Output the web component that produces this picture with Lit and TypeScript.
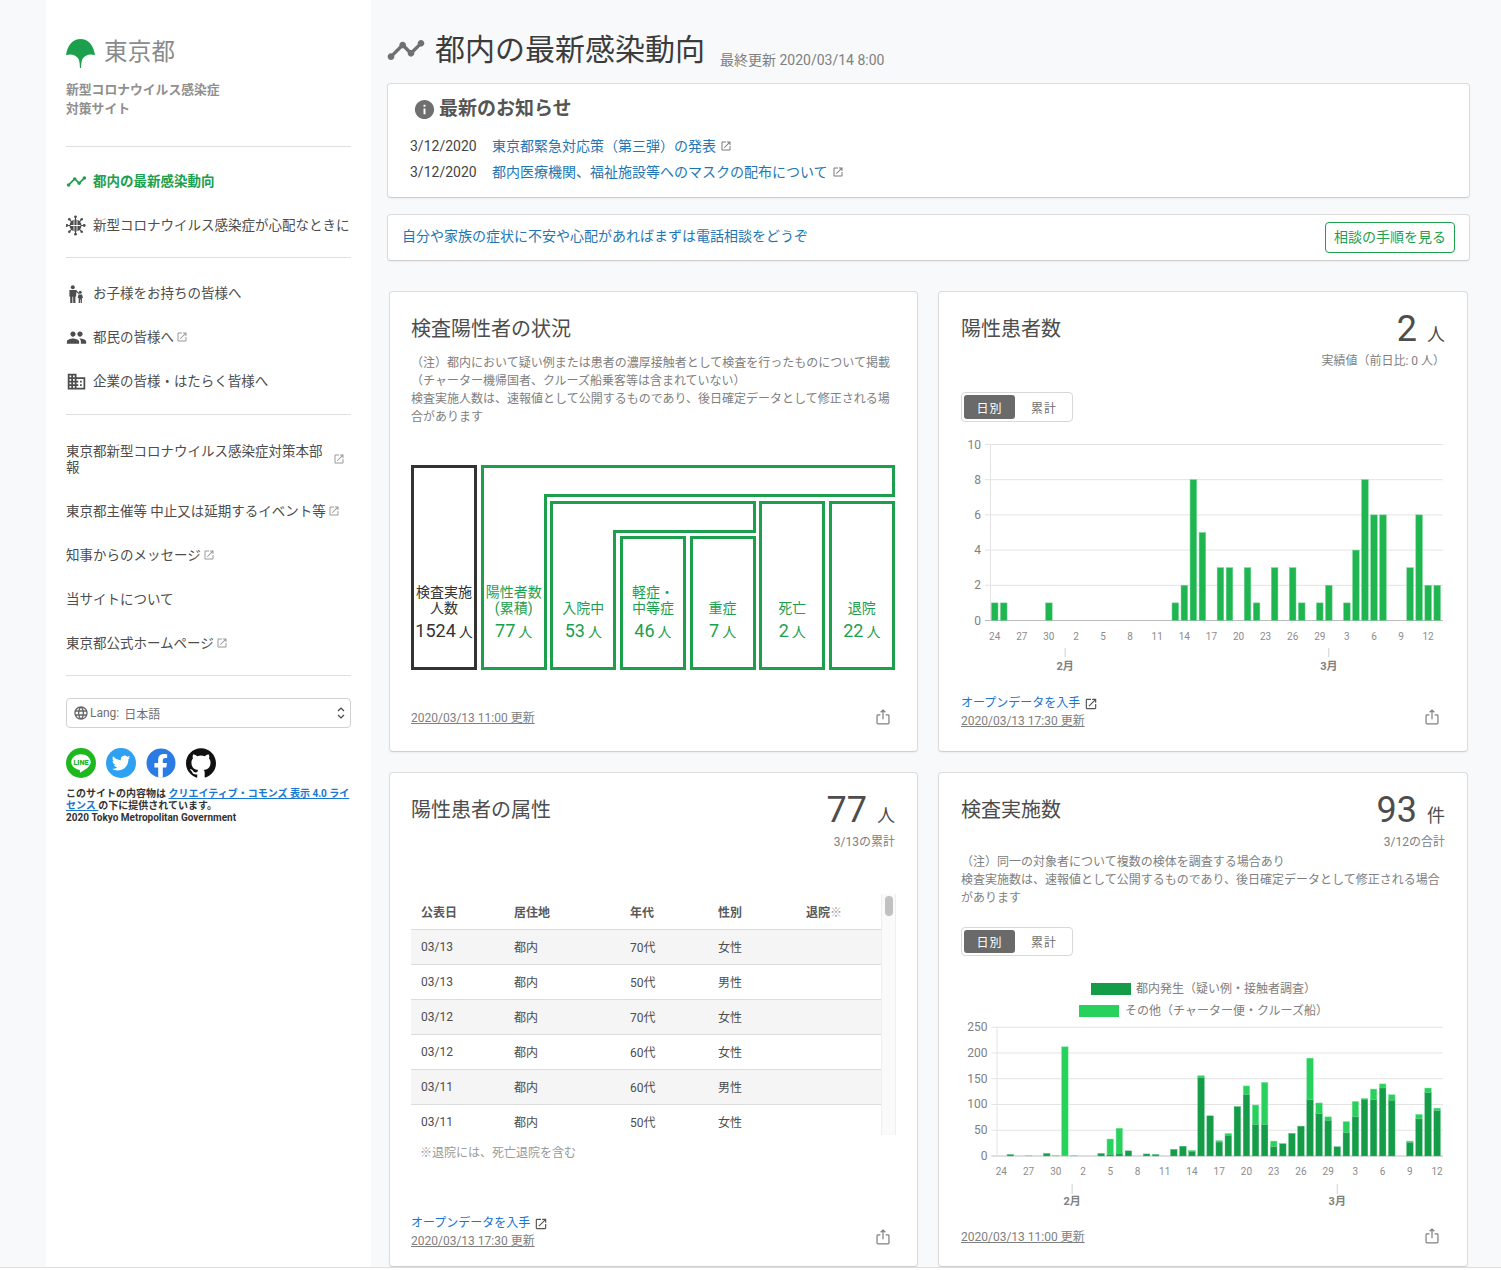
import { LitElement, html, css, svg } from "lit";
import { customElement } from "lit/decorators.js";

const P_OPEN = "M19 19H5V5h7V3H5c-1.11 0-2 .9-2 2v14c0 1.1.89 2 2 2h14c1.1 0 2-.9 2-2v-7h-2v7zM14 3v2h3.59l-9.83 9.83 1.41 1.41L19 6.41V10h2V3h-7z";
const P_TIMELINE = "M23 8c0 1.1-.9 2-2 2-.18 0-.35-.02-.51-.07l-3.56 3.55c.05.16.07.34.07.52 0 1.1-.9 2-2 2s-2-.9-2-2c0-.18.02-.36.07-.52l-2.55-2.55c-.16.05-.34.07-.52.07s-.36-.02-.52-.07l-4.55 4.56c.05.16.07.33.07.51 0 1.1-.9 2-2 2s-2-.9-2-2 .9-2 2-2c.18 0 .35.02.51.07l4.56-4.55C8.02 9.36 8 9.18 8 9c0-1.1.9-2 2-2s2 .9 2 2c0 .18-.02.36-.07.52l2.55 2.55c.16-.05.34-.07.52-.07s.36.02.52.07l3.55-3.56C19.02 8.35 19 8.18 19 8c0-1.1.9-2 2-2s2 .9 2 2z";
const P_PEOPLE = "M16 11c1.66 0 2.99-1.34 2.99-3S17.66 5 16 5c-1.66 0-3 1.34-3 3s1.34 3 3 3zm-8 0c1.66 0 2.99-1.34 2.99-3S9.66 5 8 5C6.34 5 5 6.34 5 8s1.34 3 3 3zm0 2c-2.33 0-7 1.17-7 3.5V19h14v-2.5c0-2.33-4.67-3.5-7-3.5zm8 0c-.29 0-.62.02-.97.05 1.16.84 1.97 1.97 1.97 3.45V19h6v-2.5c0-2.33-4.67-3.5-7-3.5z";
const P_DOMAIN = "M12 7V3H2v18h20V7H10zM6 19H4v-2h2v2zm0-4H4v-2h2v2zm0-4H4V9h2v2zm0-4H4V5h2v2zm4 12H8v-2h2v2zm0-4H8v-2h2v2zm0-4H8V9h2v2zm0-4H8V5h2v2zm10 12h-8v-2h2v-2h-2v-2h2v-2h-2V9h8v10zm-2-8h-2v2h2v-2zm0 4h-2v2h2v-2z";
const P_INFO = "M12 2C6.48 2 2 6.48 2 12s4.48 10 10 10 10-4.48 10-10S17.52 2 12 2zm1 15h-2v-6h2v6zm0-8h-2V7h2v2z";
const P_GLOBE = "M11.99 2C6.47 2 2 6.48 2 12s4.47 10 9.99 10C17.52 22 22 17.52 22 12S17.52 2 11.99 2zm6.93 6h-2.95c-.32-1.25-.78-2.45-1.38-3.56 1.84.63 3.37 1.91 4.33 3.56zM12 4.04c.83 1.2 1.48 2.53 1.91 3.96h-3.82c.43-1.43 1.08-2.76 1.91-3.96zM4.26 14C4.1 13.36 4 12.69 4 12s.1-1.36.26-2h3.38c-.08.66-.14 1.32-.14 2 0 .68.06 1.34.14 2H4.26zm.82 2h2.95c.32 1.25.78 2.45 1.38 3.56-1.84-.63-3.37-1.9-4.33-3.56zm2.95-8H5.08c.96-1.66 2.49-2.93 4.33-3.56C8.81 5.55 8.35 6.75 8.03 8zM12 19.96c-.83-1.2-1.48-2.53-1.91-3.96h3.82c-.43 1.43-1.08 2.76-1.91 3.96zM14.34 14H9.66c-.09-.66-.16-1.32-.16-2 0-.68.07-1.35.16-2h4.68c.09.65.16 1.32.16 2 0 .68-.07 1.34-.16 2zm.25 5.56c.6-1.11 1.06-2.31 1.38-3.56h2.95c-.96 1.65-2.49 2.93-4.33 3.56zM16.36 14c.08-.66.14-1.32.14-2 0-.68-.06-1.34-.14-2h3.38c.16.64.26 1.31.26 2s-.1 1.36-.26 2h-3.38z";
const P_GITHUB = "M12 .297c-6.63 0-12 5.373-12 12 0 5.303 3.438 9.8 8.205 11.385.6.113.82-.258.82-.577 0-.285-.01-1.04-.015-2.04-3.338.724-4.042-1.61-4.042-1.61C4.422 18.07 3.633 17.7 3.633 17.7c-1.087-.744.084-.729.084-.729 1.205.084 1.838 1.236 1.838 1.236 1.07 1.835 2.809 1.305 3.495.998.108-.776.417-1.305.76-1.605-2.665-.3-5.466-1.332-5.466-5.93 0-1.31.465-2.38 1.235-3.22-.135-.303-.54-1.523.105-3.176 0 0 1.005-.322 3.3 1.23.96-.267 1.98-.399 3-.405 1.02.006 2.04.138 3 .405 2.28-1.552 3.285-1.23 3.285-1.23.645 1.653.24 2.873.12 3.176.765.84 1.23 1.91 1.23 3.22 0 4.61-2.805 5.625-5.475 5.92.42.36.81 1.096.81 2.22 0 1.606-.015 2.896-.03 3.286 0 .315.21.69.825.57C20.565 22.092 24 17.592 24 12.297c0-6.627-5.373-12-12-12";
const P_TWITTER = "M23.953 4.57a10 10 0 01-2.825.775 4.958 4.958 0 002.163-2.723c-.951.555-2.005.959-3.127 1.184a4.92 4.92 0 00-8.384 4.482C7.69 8.095 4.067 6.13 1.64 3.162a4.822 4.822 0 00-.666 2.475c0 1.71.87 3.213 2.188 4.096a4.904 4.904 0 01-2.228-.616v.06a4.923 4.923 0 003.946 4.827 4.996 4.996 0 01-2.212.085 4.936 4.936 0 004.604 3.417 9.867 9.867 0 01-6.102 2.105c-.39 0-.779-.023-1.17-.067a13.995 13.995 0 007.557 2.209c9.053 0 13.998-7.496 13.998-13.985 0-.21 0-.42-.015-.63A9.935 9.935 0 0024 4.59z";

const icon = (d: string, cls = "") => html`<svg class="ic ${cls}" viewBox="0 0 24 24" fill="currentColor"><path d="${d}"></path></svg>`;
const ext = (cls = "ext") => icon(P_OPEN, cls);
const share = () => html`<svg class="share" viewBox="0 0 16 18" fill="none" stroke="currentColor" stroke-width="1.4"><path d="M5 6.5H2.2a1 1 0 0 0-1 1v8.3a1 1 0 0 0 1 1h11.6a1 1 0 0 0 1-1V7.5a1 1 0 0 0-1-1H11M8 11.5V1.2M5.3 3.6 8 1l2.7 2.6"></path></svg>`;

const LABELS = ["24","27","30","2","5","8","11","14","17","20","23","26","29","3","6","9","12"];
const patients: Record<number, number> = {0:1,1:1,6:1,20:1,21:2,22:8,23:5,25:3,26:3,28:3,29:1,31:3,33:3,34:1,36:1,37:2,39:1,40:4,41:8,42:6,43:6,46:3,47:6,48:2,49:2};
const tests: [number, number][] = [[0,0],[3,0],[0,0],[0,1],[0,0],[5,0],[0,1],[0,212],[0,1],[0,0],[0,0],[5,0],[3,30],[5,49],[10,0],[0,0],[4,0],[3,0],[0,0],[13,0],[19,0],[9,2],[152,4],[78,0],[27,3],[40,4],[96,0],[119,17],[61,38],[61,82],[18,11],[24,0],[44,0],[58,0],[109,81],[82,21],[69,7],[18,0],[45,22],[76,30],[110,2],[109,21],[132,8],[108,11],[0,0],[26,3],[72,9],[123,9],[88,5]];

@customElement("patients-chart")
class PatientsChart extends LitElement {
  static styles = css`
    :host { display: block; }
    svg { display: block; overflow: visible; }
    text { font-family: Roboto, "Noto Sans CJK JP", sans-serif; }
  `;
  render() {
    const x0 = 29, y0 = 175.5, unit = 17.6, step = 9.03, c0 = 33.7;
    const W = 482;
    const bar = (i: number) => c0 + i * step;
    return html`<svg width="${W}" height="${240}" viewBox="0 0 ${W} 240">
      ${[0, 2, 4, 6, 8, 10].map((v) => {
        const y = y0 - v * unit;
        return svg`<line x1="${x0 - 5}" x2="482" y1="${y}" y2="${y}" stroke="${v === 0 ? "#bdbdbd" : "#e3e3e3"}"></line>
          <text x="${x0 - 9}" y="${y + 4}" text-anchor="end" font-size="12" fill="#808080">${v}</text>`;
      })}
      <line x1="${x0 + 0.5}" x2="${x0 + 0.5}" y1="0" y2="${y0}" stroke="#e3e3e3"></line>
      ${Object.entries(patients).map(([k, v]) => {
        const cx = bar(+k);
        return svg`<rect x="${cx - 3.3}" y="${y0 - v * unit}" width="6.6" height="${v * unit}" fill="#1fb651" stroke="#6fd38f" stroke-width="0.5"></rect>`;
      })}
      ${LABELS.map((l, i) => svg`<text x="${bar(i * 3)}" y="${195}" text-anchor="middle" font-size="10" fill="#8c8c8c">${l}</text>`)}
      ${[[7.8, "2月"], [37, "3月"]].map(([i, l]) => {
        const cx = bar(i as number);
        return svg`<line x1="${cx}" x2="${cx}" y1="203" y2="212" stroke="#d0d0d0"></line>
          <text x="${cx}" y="225" text-anchor="middle" font-size="11" font-weight="700" fill="#808080">${l}</text>`;
      })}
    </svg>`;
  }
}

@customElement("tests-chart")
class TestsChart extends LitElement {
  static styles = css`
    :host { display: block; }
    svg { display: block; overflow: visible; }
    text { font-family: Roboto, "Noto Sans CJK JP", sans-serif; }
  `;
  render() {
    const W = 482, x0 = 35.5, y0 = 200, unit = 0.5152, step = 9.08, c0 = 40.3;
    const bar = (i: number) => c0 + i * step;
    return html`<svg width="${W}" height="272" viewBox="0 0 ${W} 272">
      <rect x="130" y="27" width="40" height="12" fill="#159c48"></rect>
      <text x="175" y="37" font-size="12" fill="#808080">都内発生（疑い例・接触者調査）</text>
      <rect x="118" y="49" width="40" height="12" fill="#27d15b"></rect>
      <text x="164" y="59" font-size="12" fill="#808080">その他（チャーター便・クルーズ船）</text>
      ${[0, 50, 100, 150, 200, 250].map((v) => {
        const y = y0 - v * unit;
        return svg`<line x1="${x0 - 5}" x2="482" y1="${y}" y2="${y}" stroke="${v === 0 ? "#bdbdbd" : "#e3e3e3"}"></line>
          <text x="${x0 - 9}" y="${y + 4}" text-anchor="end" font-size="12" fill="#808080">${v}</text>`;
      })}
      <line x1="${x0 + 0.5}" x2="${x0 + 0.5}" y1="${y0 - 250 * unit}" y2="${y0}" stroke="#e3e3e3"></line>
      ${tests.map(([a, b], i) => {
        const cx = bar(i);
        if (a + b === 0) return null;
        return svg`${b > 0 ? svg`<rect x="${cx - 3.3}" y="${y0 - (a + b) * unit}" width="6.6" height="${b * unit}" fill="#27d15b" stroke="#8fe8ab" stroke-width="0.5"></rect>` : null}
        ${a > 0 ? svg`<rect x="${cx - 3.3}" y="${y0 - a * unit}" width="6.6" height="${a * unit}" fill="#159c48" stroke="#5cc283" stroke-width="0.4"></rect>` : null}`;
      })}
      ${LABELS.map((l, i) => svg`<text x="${bar(i * 3)}" y="${219}" text-anchor="middle" font-size="10" fill="#8c8c8c">${l}</text>`)}
      ${[[7.8, "2月"], [37, "3月"]].map(([i, l]) => {
        const cx = bar(i as number);
        return svg`<line x1="${cx}" x2="${cx}" y1="228" y2="238" stroke="#d0d0d0"></line>
          <text x="${cx}" y="249" text-anchor="middle" font-size="11" font-weight="700" fill="#808080">${l}</text>`;
      })}
    </svg>`;
  }
}

const ROWS = [
  ["03/13", "都内", "70代", "女性"],
  ["03/13", "都内", "50代", "男性"],
  ["03/12", "都内", "70代", "女性"],
  ["03/12", "都内", "60代", "女性"],
  ["03/11", "都内", "60代", "男性"],
  ["03/11", "都内", "50代", "女性"],
];

@customElement("app-root")
export class AppRoot extends LitElement {
  static styles = css`
    :host {
      display: block; height: 1270px; overflow: hidden; background: #fff;
      font-family: Roboto, "Noto Sans CJK JP", sans-serif; color: #4d4d4d;
    }
    * { box-sizing: border-box; }
    a { color: inherit; text-decoration: none; }
    .ic { display: block; flex: none; width: 20px; height: 20px; }
    .layout { display: flex; height: 1268px; padding-left: 46px; background: #f8f9fa; border-bottom: 1px solid #dedede; overflow: hidden; }

    .side { flex: none; width: 325px; background: #fff; padding: 39px 20px 0; }
    .logo { display: flex; align-items: center; gap: 9px; height: 28px; }
    .logo svg { width: 29px; height: 29px; flex: none; }
    .logo span { font-size: 23.5px; font-weight: 400; color: #8a8a8a; letter-spacing: 0.2px; line-height: 26px; padding-bottom: 2px; }
    .sitename { margin: 13px 0 28px; font-size: 12.8px; line-height: 19px; font-weight: 700; color: #8f8f8f; }
    hr { border: 0; border-top: 1px solid #dfdfdf; margin: 0; }
    .nav { padding: 12px 0 10px; }
    .nav.b { padding-top: 13px; padding-bottom: 11px; }
    .nav.c { padding: 14px 0 10px; }
    .item { display: flex; align-items: center; min-height: 44px; padding: 14px 0; font-size: 13.5px; line-height: 16px; color: #4d4d4d; }
    .item .ic.lead { width: 21px; height: 21px; margin: -4px 6px -4px 0; color: #4d4d4d; }
    .item.on { color: #1ca04e; font-weight: 700; }
    .item.on .ic.lead { color: #1ca04e; }
    .lead-svg { flex: none; width: 21px; height: 21px; margin: -4px 6px -4px 0; display: block; color: #4d4d4d; }
    .ext { width: 12px; height: 12px; color: #9a9a9a; margin-left: 2px; }
    .item .wrapt { width: 262px; }
    .item .ext.far { margin-left: 5px; }

    .lang { margin-top: 22px; height: 30px; border: 1px solid #d0d0d0; border-radius: 4px; display: flex; align-items: center; padding: 0 6px; font-size: 12px; color: #707070; }
    .lang .ic { width: 16px; height: 16px; color: #666; margin-right: 1px; }
    .lang .v { margin-left: 5px; }
    .lang .chev { width: 10px; height: 14px; margin-left: auto; margin-right: -2px; color: #444; flex: none; }
    .social { display: flex; margin-top: 20px; align-items: center; gap: 10px; }
    .social svg { display: block; width: 30px; height: 30px; flex: none; }
    .social text { font-family: Roboto, sans-serif; }
    .foot { margin-top: 9px; padding-top: 1px; font-size: 10px; line-height: 12px; font-weight: 700; color: #333; }
    .foot a { color: #1976d2; text-decoration: underline; }

    .main { flex: 1; min-width: 0; padding: 30px 31px 0 16px; }
    .pagehead { display: flex; height: 40px; }
    .pagehead .ic { width: 40px; height: 40px; color: #707070; margin: 0 9px 0 -1px; }
    h1 { margin: 0; font-size: 30px; line-height: 40px; font-weight: 400; color: #3c3c3c; }
    .upd { margin-left: 15px; font-size: 14px; line-height: 20px; color: #808080; align-self: flex-end; }

    .panel { background: #fff; border: 1px solid #dcdcdc; border-bottom-color: #cfcfcf; border-radius: 4px; box-shadow: 0 1px 2px rgba(0,0,0,.05); }
    .news { height: 115px; margin-top: 13px; padding: 12px 22px; }
    .news h2 { display: flex; align-items: center; margin: 0 0 0 3px; font-size: 19px; line-height: 26px; font-weight: 700; color: #555; }
    .news h2 .ic { width: 23px; height: 23px; color: #6f6f6f; margin-right: 3px; }
    .newsrow { display: flex; align-items: center; font-size: 14px; line-height: 26px; color: #444; }
    .newsrows { margin-top: 11px; }
    .newsrow .d { width: 82px; }
    .newsrow a { color: #1f76b2; }
    .newsrow .ext { margin-left: 4px; color: #7a7a7a; }
    .consult { margin-top: 16px; height: 47px; display: flex; align-items: center; justify-content: space-between; padding: 0 14px; font-size: 14px; color: #1f76b2; }
    .consult a { padding-bottom: 5px; }
    .consult button { height: 31px; width: 130px; border: 1px solid #1ca04e; border-radius: 4px; background: #fff; color: #1ca04e; font: inherit; font-size: 14px; padding: 0 0 4px; }

    .grid { display: grid; grid-template-columns: 529px 530px; grid-template-rows: 461px 495px; gap: 20px; margin: 30px 0 0 2px; }
    .card { display: flex; flex-direction: column; padding: 20px 22px 0; position: relative; }
    .card.l { padding-left: 21px; }
    .chead { display: flex; justify-content: space-between; align-items: flex-start; }
    .ctitle { font-size: 20px; line-height: 34px; font-weight: 400; color: #4d4d4d; margin: 0; }
    .big { text-align: right; }
    .big .n { font-size: 36px; line-height: 34px; color: #4d4d4d; }
    .big .u { font-size: 18px; margin-left: 10px; }
    .big .s { font-size: 12px; line-height: 18px; color: #808080; margin-top: 6px; }
    .note { font-size: 12px; line-height: 18px; color: #808080; margin: 0; }
    .note.n1 { margin-top: 8px; }
    .note.n2 { margin-top: 2px; }
    .cfoot { margin-top: auto; padding-bottom: 24px; display: flex; justify-content: space-between; align-items: flex-end; }
    .cfoot.r2 { padding-bottom: 20px; }
    .cfoot.r2l { padding-bottom: 19px; }
    .two { margin-bottom: -3px; }
    .open { display: flex; align-items: center; font-size: 12px; line-height: 17px; color: #1976d2; }
    .open .ic { width: 14px; height: 14px; margin-left: 4px; color: #555; }
    .stamp { display: block; font-size: 12px; line-height: 18px; color: #808080; text-decoration: underline; }
    .share { display: block; width: 14px; height: 16px; color: #808080; margin-right: 6px; margin-bottom: 2px; }
    .card.l .share { margin-right: 5px; }

    .toggle { display: inline-flex; align-self: flex-start; height: 30px; padding: 2px; border: 1px solid #d8d8d8; border-radius: 4px; font-size: 12px; }
    .toggle span { width: 51px; display: flex; align-items: center; justify-content: center; color: #707070; letter-spacing: 1px; }
    .toggle span + span { width: 55px; padding-left: 3px; }
    .toggle .act { background: #6a6a6a; color: #fff; border-radius: 3px; }
    .toggle.t1 { margin-top: 22px; }
    .toggle.t2 { margin-top: 20px; }
    patients-chart { margin-top: 23px; }

    .boxes { display: flex; gap: 3.5px; margin-top: 39px; height: 205px; width: 484px; }
    .boxes, .lg, .rest { font-size: 14px; line-height: 16px; text-align: center; color: #1ca04e; }
    .bx { display: flex; flex-direction: column; justify-content: flex-end; align-items: center; width: 66.14px; flex: none; border: 3px solid #1ca04e; padding-bottom: 24px; min-height: 0; }
    .bx.ink { border-color: #333; color: #333; }
    .val { font-size: 18px; line-height: 22px; margin-top: 4px; white-space: nowrap; }
    .val small { font-size: 14px; margin-left: 3px; }
    .lab { white-space: nowrap; }
    .lg { flex: 1; min-width: 0; display: grid; grid-template-columns: 66.14px 1fr; grid-template-rows: 32px 1fr; }
    .lg > .a { border: solid #1ca04e; border-width: 3px 0 0 3px; }
    .lg > .b { border: solid #1ca04e; border-width: 3px 3px 3px 0; }
    .lg > .bx { margin-top: -3px; border-top: 0; }
    .lg > .rest { display: flex; gap: 3.5px; padding: 3.5px 0 0 3.5px; min-height: 0; }
    .rest > .lg { flex: none; width: 205.42px; }

    .tbl { margin-top: 43px; height: 241px; width: 485px; display: flex; }
    .tbl .tw { width: 470px; flex: none; overflow: hidden; }
    .tbl .sb { flex: none; width: 15px; background: #fafafa; border-left: 1px solid #eee; border-right: 1px solid #eee; padding: 2px 3px; }
    .tbl .sb i { display: block; width: 8px; height: 20px; border-radius: 4px; background: #c1c1c1; }
    table { width: 470px; border-collapse: collapse; table-layout: fixed; font-size: 12px; color: #4d4d4d; }
    col.c1 { width: 93px; }
    col.c2 { width: 116px; }
    col.c3 { width: 88px; }
    th { height: 35px; font-weight: 700; text-align: left; padding: 0 0 0 10px; color: #5a5a5a; }
    th em { font-style: normal; font-weight: 400; color: #a0a0a0; }
    td { height: 35px; padding: 0 0 0 10px; border-top: 1px solid #dcdcdc; }
    tr.odd td { background: #f5f5f5; }
    .tnote { margin: 9px 0 0 9px; font-size: 12px; line-height: 18px; color: #9a9a9a; }
  `;

  render() {
    return html`<div class="layout">
      <aside class="side">
        <div class="logo">
          <svg viewBox="0 0 28 28"><path fill="#1ca04e" d="M14 0C7 0 1.6 5.2 0 15.6c4.6-1.6 9.8-.6 12.4 4.2.6 2 .9 4.6 1.1 8.2h1c.2-3.6.5-6.2 1.1-8.2 2.6-4.8 7.8-5.8 12.4-4.2C26.4 5.2 21 0 14 0z"></path></svg>
          <span>東京都</span>
        </div>
        <div class="sitename">新型コロナウイルス感染症<br />対策サイト</div>
        <hr />
        <nav class="nav">
          <a class="item on">${icon(P_TIMELINE, "lead")}都内の最新感染動向</a>
          <a class="item">
            <svg class="lead-svg" viewBox="1 0 21 21" fill="currentColor">
              <circle cx="10.5" cy="10.5" r="6"></circle>
              <path d="M8.6 5h.8v11h-.8zM11.6 5h.8v11h-.8zM5 10.1h11v.8H5z" fill="#fff"></path>
              <path stroke="currentColor" stroke-width="1.1" d="M10.5 2.5v3M10.5 15.5v3M2.5 10.5h3M15.5 10.5h3M4.8 4.8l2 2M14.2 14.2l2 2M16.2 4.8l-2 2M6.8 14.2l-2 2"></path>
              <circle cx="10.5" cy="1.8" r="1.4"></circle><circle cx="10.5" cy="19.2" r="1.4"></circle><circle cx="1.8" cy="10.5" r="1.4"></circle><circle cx="19.2" cy="10.5" r="1.4"></circle><circle cx="4.3" cy="4.3" r="1.3"></circle><circle cx="16.7" cy="4.3" r="1.3"></circle><circle cx="4.3" cy="16.7" r="1.3"></circle><circle cx="16.7" cy="16.7" r="1.3"></circle>
            </svg>
            新型コロナウイルス感染症が心配なときに
          </a>
        </nav>
        <hr />
        <nav class="nav b">
          <a class="item">
            <svg class="lead-svg" viewBox="0 0 21 21" fill="currentColor">
              <circle cx="6.8" cy="4.2" r="2"></circle>
              <path d="M3.4 7h6.8l3 3.4-.8.7-2.2-2.1v4.4H9.4V20H7.2v-6.2h-.8V20H4.2v-6.6h-.8z"></path>
              <circle cx="14.2" cy="9.2" r="1.5"></circle>
              <path d="M12.4 11.4h3.6l1 3.6h-1.1v5h-1.3v-3.4h-.6V20h-1.3v-5h-1z"></path>
            </svg>
            お子様をお持ちの皆様へ
          </a>
          <a class="item">${icon(P_PEOPLE, "lead")}都民の皆様へ${ext()}</a>
          <a class="item">${icon(P_DOMAIN, "lead")}企業の皆様・はたらく皆様へ</a>
        </nav>
        <hr />
        <nav class="nav c">
          <a class="item"><span class="wrapt">東京都新型コロナウイルス感染症対策本部報</span>${ext("ext far")}</a>
          <a class="item">東京都主催等 中止又は延期するイベント等${ext()}</a>
          <a class="item">知事からのメッセージ${ext()}</a>
          <a class="item">当サイトについて</a>
          <a class="item">東京都公式ホームページ${ext()}</a>
        </nav>
        <hr />
        <div class="lang">
          ${icon(P_GLOBE)}<span>Lang:</span><span class="v">日本語</span>
          <svg class="chev" viewBox="0 0 10 14" fill="none" stroke="currentColor" stroke-width="1.2"><path d="M2 5l3-3 3 3M2 9l3 3 3-3"></path></svg>
        </div>
        <div class="social">
          <svg viewBox="0 0 30 30">
            <circle cx="15" cy="15" r="15" fill="#1cb81e"></circle>
            <path fill="#fff" d="M15 6.2c-5.4 0-9.7 3.5-9.7 7.9 0 3.9 3.4 7.1 8.1 7.8.7.1.5 1.6.4 2.2 0 .4.3.5.7.3 2-1.1 6.5-3.6 8.3-5.8 1.2-1.4 1.9-2.9 1.9-4.5 0-4.4-4.3-7.9-9.7-7.9z"></path>
            <text x="15" y="16.8" text-anchor="middle" font-size="7.2" font-weight="900" fill="#1cb81e">LINE</text>
          </svg>
          <svg viewBox="0 0 30 30">
            <circle cx="15" cy="15" r="15" fill="#2ea1f2"></circle>
            <g transform="translate(5.8 5.8) scale(.77)"><path fill="#fff" d="${P_TWITTER}"></path></g>
          </svg>
          <svg viewBox="0 0 30 30">
            <circle cx="15" cy="15" r="14.5" fill="#2b7be4"></circle>
            <path fill="#fff" d="M20.3 19.4l.65-4.3h-4.15v-2.8c0-1.2.58-2.35 2.45-2.35h1.9V6.3s-1.7-.3-3.35-.3c-3.4 0-5.65 2.07-5.65 5.8v3.3H8.4v4.3h3.8v10.1c.75.1 1.55.2 2.3.2s1.55-.1 2.3-.2V19.4z"></path>
          </svg>
          <svg viewBox="0 0 24 24"><path fill="#111" d="${P_GITHUB}"></path></svg>
        </div>
        <div class="foot">
          このサイトの内容物は <a>クリエイティブ・コモンズ 表示 4.0 ライセンス </a>の下に提供されています。<br />2020 Tokyo Metropolitan Government
        </div>
      </aside>

      <main class="main">
        <div class="pagehead">
          ${icon(P_TIMELINE)}
          <h1>都内の最新感染動向</h1>
          <span class="upd">最終更新 2020/03/14 8:00</span>
        </div>
        <section class="panel news">
          <h2>${icon(P_INFO)}最新のお知らせ</h2>
          <div class="newsrows">
            <div class="newsrow"><span class="d">3/12/2020</span><a>東京都緊急対応策（第三弾）の発表</a>${ext()}</div>
            <div class="newsrow"><span class="d">3/12/2020</span><a>都内医療機関、福祉施設等へのマスクの配布について</a>${ext()}</div>
          </div>
        </section>
        <section class="panel consult">
          <a>自分や家族の症状に不安や心配があればまずは電話相談をどうぞ</a>
          <button>相談の手順を見る</button>
        </section>

        <div class="grid">
          <section class="panel card l">
            <h3 class="ctitle">検査陽性者の状況</h3>
            <p class="note n1">（注）都内において疑い例または患者の濃厚接触者として検査を行ったものについて掲載<br />（チャーター機帰国者、クルーズ船乗客等は含まれていない）<br />検査実施人数は、速報値として公開するものであり、後日確定データとして修正される場合があります</p>
            <div class="boxes">
              <div class="bx ink"><div class="lab">検査実施</div><div class="lab">人数</div><div class="val">1524<small>人</small></div></div>
              <div class="lg">
                <div class="a"></div><div class="b"></div>
                <div class="bx"><div class="lab">陽性者数</div><div class="lab">(累積)</div><div class="val">77<small>人</small></div></div>
                <div class="rest">
                  <div class="lg">
                    <div class="a"></div><div class="b"></div>
                    <div class="bx"><div class="lab">入院中</div><div class="val">53<small>人</small></div></div>
                    <div class="rest">
                      <div class="bx"><div class="lab">軽症・</div><div class="lab">中等症</div><div class="val">46<small>人</small></div></div>
                      <div class="bx"><div class="lab">重症</div><div class="val">7<small>人</small></div></div>
                    </div>
                  </div>
                  <div class="bx"><div class="lab">死亡</div><div class="val">2<small>人</small></div></div>
                  <div class="bx"><div class="lab">退院</div><div class="val">22<small>人</small></div></div>
                </div>
              </div>
            </div>
            <div class="cfoot"><a class="stamp">2020/03/13 11:00 更新</a>${share()}</div>
          </section>

          <section class="panel card">
            <div class="chead">
              <h3 class="ctitle">陽性患者数</h3>
              <div class="big"><div><span class="n">2</span><span class="u">人</span></div><div class="s">実績値（前日比: 0 人）</div></div>
            </div>
            <div class="toggle t1"><span class="act">日別</span><span>累計</span></div>
            <patients-chart></patients-chart>
            <div class="cfoot"><div class="two"><a class="open">オープンデータを入手${icon(P_OPEN)}</a><a class="stamp">2020/03/13 17:30 更新</a></div>${share()}</div>
          </section>

          <section class="panel card l">
            <div class="chead">
              <h3 class="ctitle">陽性患者の属性</h3>
              <div class="big"><div><span class="n">77</span><span class="u">人</span></div><div class="s">3/13の累計</div></div>
            </div>
            <div class="tbl">
              <div class="tw">
                <table>
                  <colgroup><col class="c1" /><col class="c2" /><col class="c3" /><col class="c3" /><col /></colgroup>
                  <thead><tr><th>公表日</th><th>居住地</th><th>年代</th><th>性別</th><th>退院<em>※</em></th></tr></thead>
                  <tbody>
                    ${ROWS.map((r, i) => html`<tr class="${i % 2 === 0 ? "odd" : ""}">${r.map((c) => html`<td>${c}</td>`)}<td></td></tr>`)}
                  </tbody>
                </table>
              </div>
              <div class="sb"><i></i></div>
            </div>
            <div class="tnote">※退院には、死亡退院を含む</div>
            <div class="cfoot r2l"><div class="two"><a class="open">オープンデータを入手${icon(P_OPEN)}</a><a class="stamp">2020/03/13 17:30 更新</a></div>${share()}</div>
          </section>

          <section class="panel card">
            <div class="chead">
              <h3 class="ctitle">検査実施数</h3>
              <div class="big"><div><span class="n">93</span><span class="u">件</span></div><div class="s">3/12の合計</div></div>
            </div>
            <p class="note n2">（注）同一の対象者について複数の検体を調査する場合あり<br />検査実施数は、速報値として公開するものであり、後日確定データとして修正される場合があります</p>
            <div class="toggle t2"><span class="act">日別</span><span>累計</span></div>
            <tests-chart></tests-chart>
            <div class="cfoot r2"><a class="stamp">2020/03/13 11:00 更新</a>${share()}</div>
          </section>
        </div>
      </main>
    </div>`;
  }
}
